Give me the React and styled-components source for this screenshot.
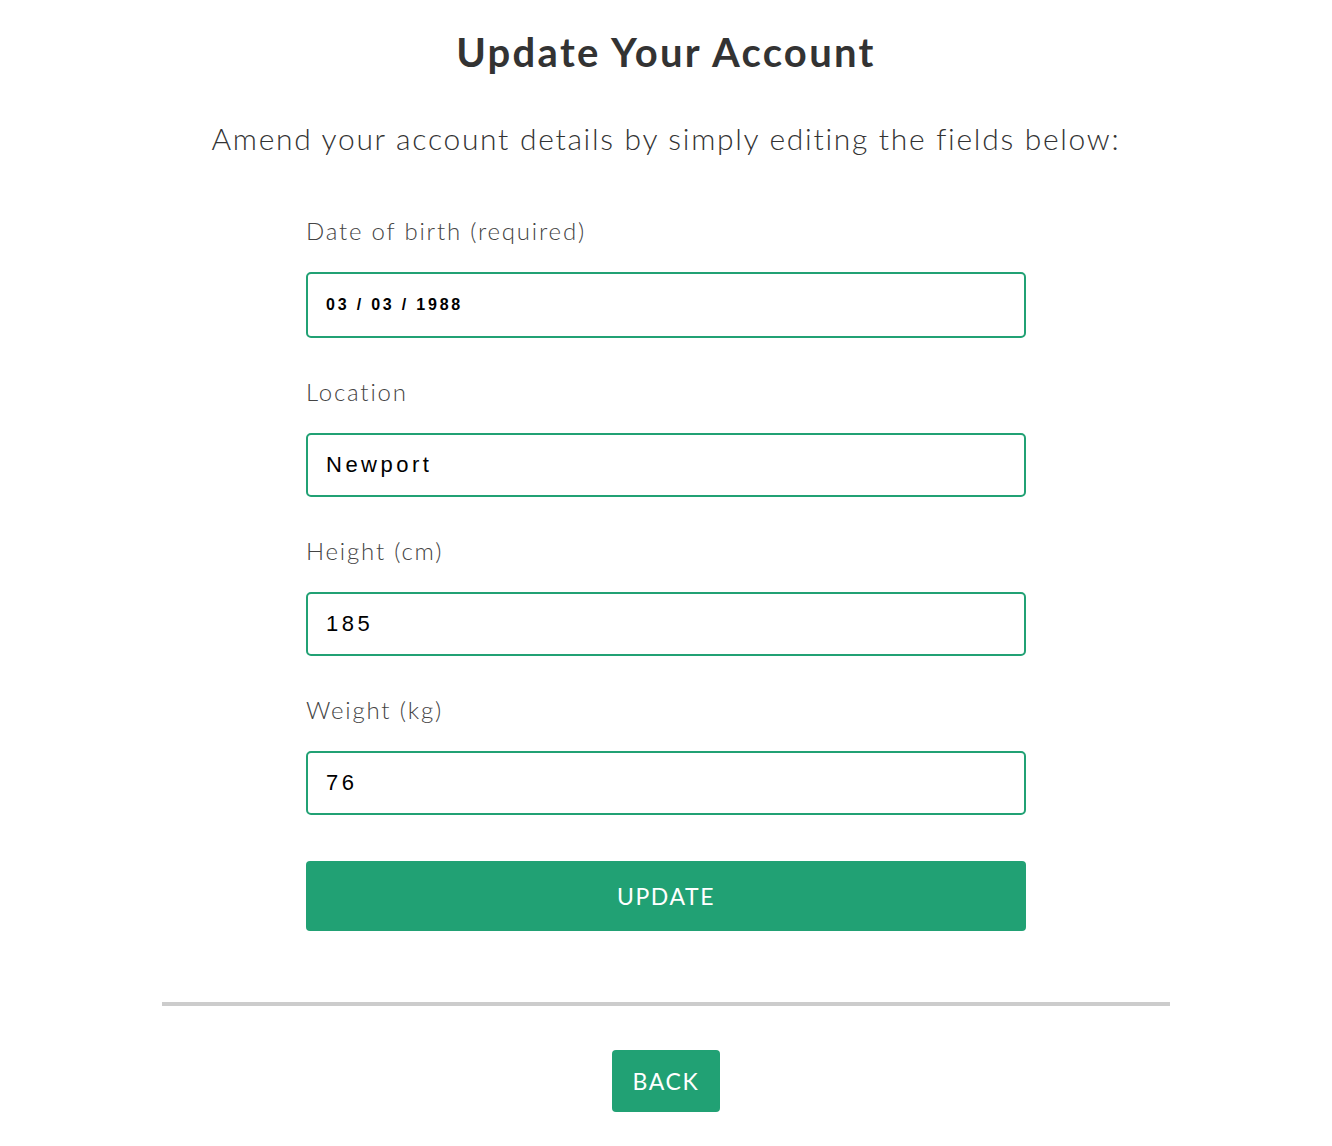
import React, { useState } from "react";
import styled, { createGlobalStyle } from "styled-components";

const GREEN = "#21a174";

const GlobalStyle = createGlobalStyle`
  body {
    margin: 0;
    background: #fff;
    font-family: Lato, "Open Sans", sans-serif;
  }
`;

const Page = styled.div`
  width: 1008px;
  margin: 0 auto;
  padding-top: 26px;
  display: flex;
  flex-direction: column;
  align-items: center;
  color: #333;
`;

const Title = styled.h1`
  margin: 0;
  font-size: 40px;
  font-weight: 700;
  letter-spacing: 2.3px;
  line-height: 52px;
`;

const Intro = styled.p`
  margin: 40px 0 0;
  font-size: 30px;
  font-weight: 300;
  letter-spacing: 1.7px;
  line-height: 40px;
`;

const Form = styled.form`
  width: 720px;
  margin-top: 57px;
  display: flex;
  flex-direction: column;
`;

const Field = styled.div`
  display: flex;
  flex-direction: column;
  margin-bottom: 38px;

  &:last-of-type {
    margin-bottom: 46px;
  }
`;

const Label = styled.label`
  font-size: 24px;
  font-weight: 300;
  letter-spacing: 1.8px;
  color: #444;
  line-height: 32px;
  margin-bottom: 25px;
`;

const Input = styled.input`
  box-sizing: border-box;
  width: 100%;
  height: ${(p) => (p.$small ? "66px" : "64px")};
  border: 2px solid ${GREEN};
  border-radius: 5px;
  padding: 0 18px;
  font-family: "Liberation Sans", Arial, sans-serif;
  font-size: ${(p) => (p.$small ? "16px" : "22px")};
  font-weight: ${(p) => (p.$small ? 700 : 400)};
  letter-spacing: ${(p) => (p.$small ? "2.8px" : "3.5px")};
  color: #000;
  outline: none;
  background: #fff;
`;

const Button = styled.button`
  border: none;
  background: ${GREEN};
  color: #fff;
  font-family: Lato, "Open Sans", sans-serif;
  font-size: 23px;
  letter-spacing: 1.6px;
  border-radius: 4px;
  cursor: pointer;
  width: ${(p) => (p.$block ? "100%" : "auto")};
  height: ${(p) => (p.$block ? "70px" : "62px")};
  padding: ${(p) => (p.$block ? "0" : "0 21px")};
`;

const Divider = styled.hr`
  width: 100%;
  border: none;
  height: 4px;
  background: #cccccc;
  margin: 71px 0 44px;
`;

const fields = [
  { id: "dob", label: "Date of birth (required)", value: "03 / 03 / 1988", small: true },
  { id: "location", label: "Location", value: "Newport" },
  { id: "height", label: "Height (cm)", value: "185" },
  { id: "weight", label: "Weight (kg)", value: "76" },
];

export default function App() {
  const [values, setValues] = useState(
    Object.fromEntries(fields.map((f) => [f.id, f.value]))
  );

  return (
    <>
      <GlobalStyle />
      <Page>
        <Title>Update Your Account</Title>
        <Intro>Amend your account details by simply editing the fields below:</Intro>
        <Form onSubmit={(e) => e.preventDefault()}>
          {fields.map((f) => (
            <Field key={f.id}>
              <Label htmlFor={f.id}>{f.label}</Label>
              <Input
                id={f.id}
                $small={f.small}
                value={values[f.id]}
                onChange={(e) => setValues({ ...values, [f.id]: e.target.value })}
              />
            </Field>
          ))}
          <Button type="submit" $block>
            UPDATE
          </Button>
        </Form>
        <Divider />
        <Button type="button">BACK</Button>
      </Page>
    </>
  );
}
